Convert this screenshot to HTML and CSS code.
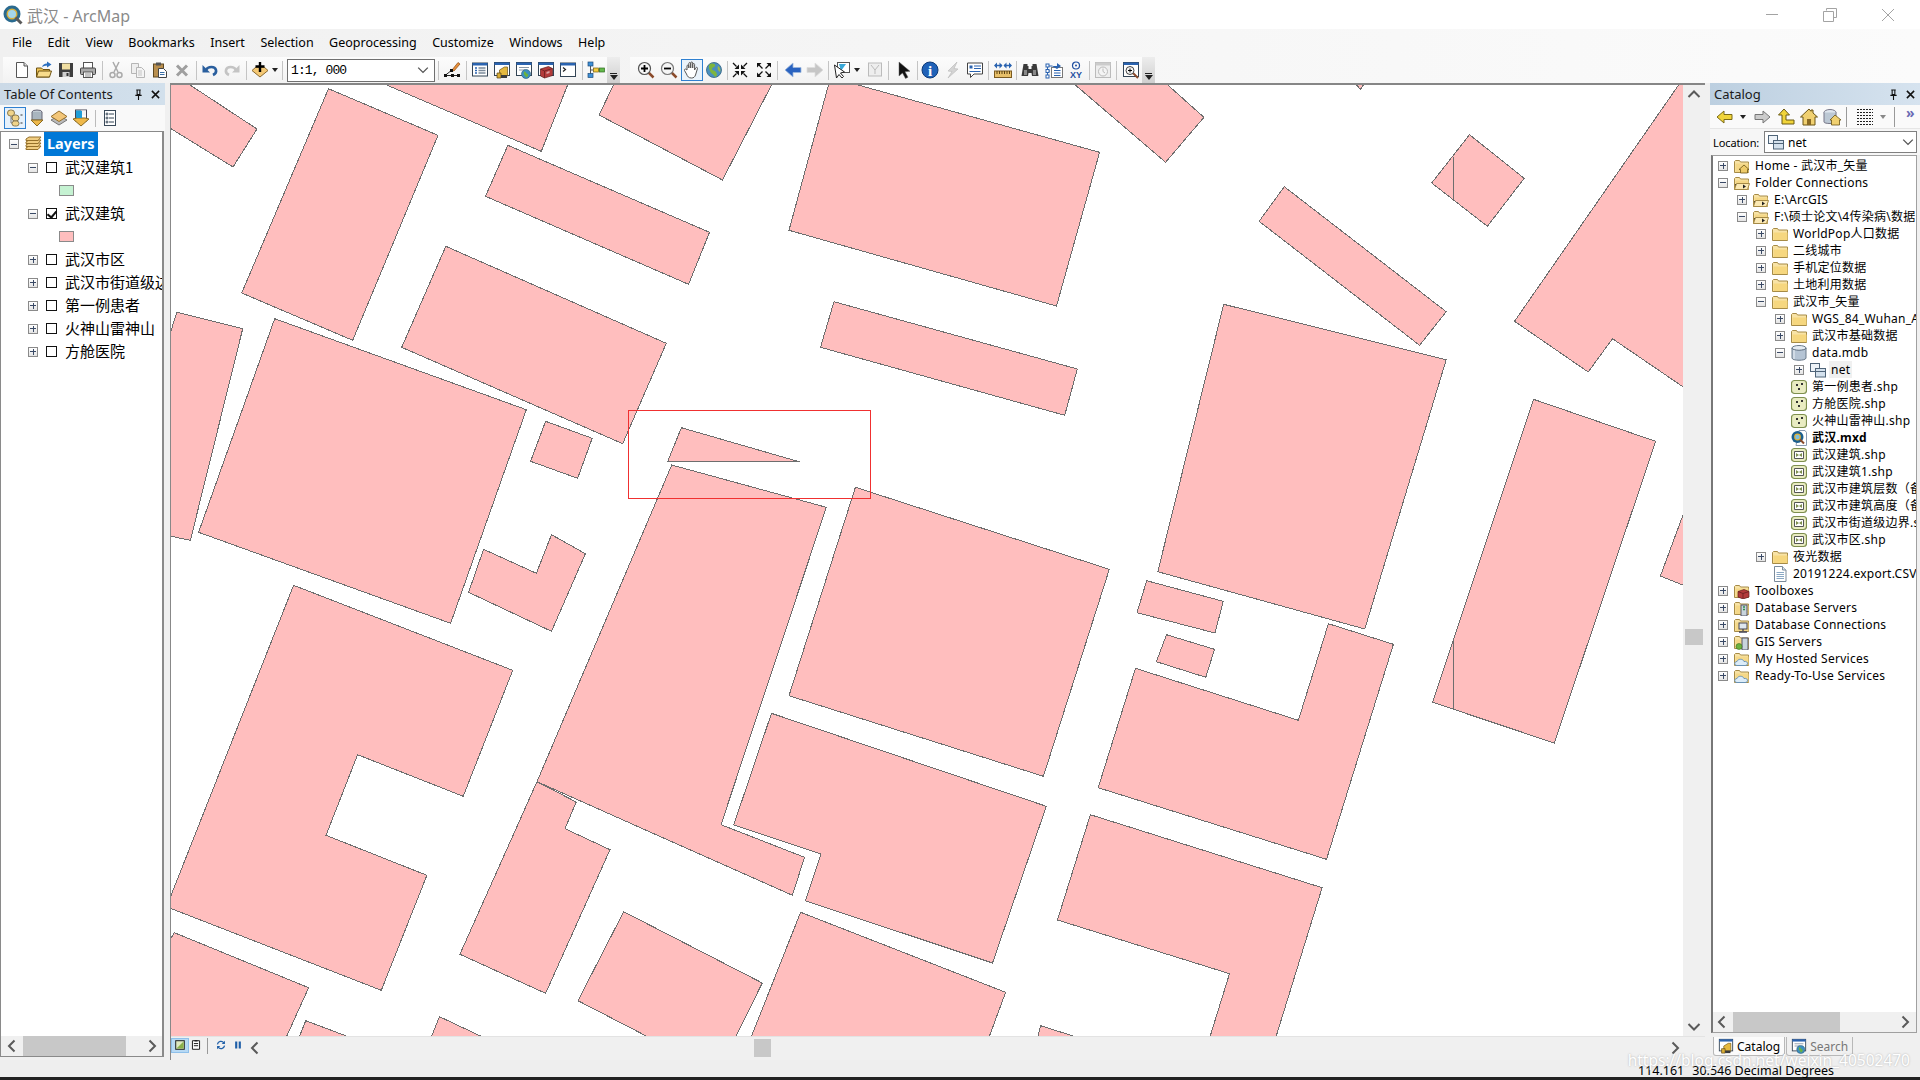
FILE: index.html
```html
<!DOCTYPE html>
<html lang="zh-CN">
<head>
<meta charset="utf-8">
<title>武汉 - ArcMap</title>
<link rel="stylesheet" href="styles.css">
</head>
<body>
<svg class="defs" xmlns="http://www.w3.org/2000/svg">
<symbol id="i-new" viewBox="0 0 18 18"><path d="M3.500 1.500h7.500l3.500 3.500v11.500h-11z" fill="#fff" stroke="#555"/><path d="M11 1.500V5h3.500" fill="#ddd" stroke="#555"/></symbol>
<symbol id="i-open" viewBox="0 0 18 18"><path d="M1.500 7h5l1.500 1.500h6.500v7.500H1.500z" fill="#f0c557" stroke="#6e5312"/><path d="M1.500 16l2-6h13l-2 6z" fill="#f8dc8c" stroke="#6e5312"/><path d="M7 6q1-3.500 5-3.500V.5l4.500 3-4.500 3v-2q-3 0-5 1.500z" fill="#2a6fc0"/></symbol>
<symbol id="i-save" viewBox="0 0 18 18"><path d="M2 2h14v14H2z" fill="#3f3f3f"/><rect x="5" y="2.500" width="8" height="6" fill="#f1dfa2"/><rect x="5.500" y="11" width="7" height="5" fill="#cfcfcf"/><rect x="9.500" y="12" width="2" height="3" fill="#333"/></symbol>
<symbol id="i-print" viewBox="0 0 18 18"><rect x="4.500" y="1.500" width="9" height="6" fill="#fff" stroke="#555"/><rect x="1.500" y="7" width="15" height="6.500" rx="1" fill="#a9a9a9" stroke="#444"/><rect x="4.500" y="11" width="9" height="5.500" fill="#fff" stroke="#555"/><path d="M6 13h6M6 15h6" stroke="#888"/></symbol>
<symbol id="i-cut" viewBox="0 0 18 18"><path d="M6 1l5 10M12 1L7 11" stroke="#aaa" stroke-width="1.500" fill="none"/><circle cx="5.500" cy="14" r="2.500" fill="none" stroke="#aaa" stroke-width="1.500"/><circle cx="12.500" cy="14" r="2.500" fill="none" stroke="#aaa" stroke-width="1.500"/></symbol>
<symbol id="i-copy" viewBox="0 0 18 18"><path d="M2.500 2.500h7v10h-7z" fill="#eee" stroke="#b5b5b5"/><path d="M7.500 6.500h5l3 3v7h-8z" fill="#f4f4f4" stroke="#b5b5b5"/><path d="M9 10h4M9 12h4M9 14h4" stroke="#c4c4c4"/></symbol>
<symbol id="i-paste" viewBox="0 0 18 18"><rect x="2.500" y="3" width="10" height="13" fill="#b98f4e" stroke="#5e4820"/><rect x="5" y="1.500" width="5" height="3" fill="#555"/><path d="M7.500 7.500h5l3 3v6h-8z" fill="#fff" stroke="#444"/><path d="M9 11.500h4.500M9 13.500h4.500" stroke="#3a6ea5"/></symbol>
<symbol id="i-del" viewBox="0 0 18 18"><path d="M4 4.500l10 10M14 4.500l-10 10" stroke="#9f9f9f" stroke-width="3"/></symbol>
<symbol id="i-undo" viewBox="0 0 18 18"><path d="M5 9c2-4 9-4 10 0 .5 2-1 4-3 5" fill="none" stroke="#2a5f9e" stroke-width="2.600"/><path d="M1.500 4v7.500H9z" fill="#2a5f9e"/></symbol>
<symbol id="i-redo" viewBox="0 0 18 18"><path d="M13 9C11 5 4 5 3 9c-.5 2 1 4 3 5" fill="none" stroke="#c4c4c4" stroke-width="2.600"/><path d="M16.500 4v7.500H9z" fill="#c4c4c4"/></symbol>
<symbol id="i-add" viewBox="0 0 18 18"><path d="M1 9.500L9 16l8-6.500L13 6H5z" fill="#f4c874" stroke="#8a6a30"/><path d="M9 1v10M4.500 5.500h9" stroke="#000" stroke-width="2.400"/></symbol>
<symbol id="i-edit" viewBox="0 0 18 18"><path d="M9 9L15 1.500l2 1.500-6 7z" fill="#e88f3a" stroke="#8a4a12" stroke-width=".7"/><path d="M2 14.500L9 9M2 14.500h14" stroke="#222"/><rect x="1" y="13" width="3" height="3" fill="#111"/><rect x="8" y="13" width="3" height="3" fill="#111"/><rect x="14" y="13" width="3" height="3" fill="#111"/><rect x="7" y="8" width="3" height="3" fill="#111"/></symbol>
<symbol id="i-toc" viewBox="0 0 18 18"><rect x="1.500" y="2" width="15" height="13" fill="#fff" stroke="#345"/><rect x="1.500" y="2" width="15" height="2.500" fill="#2a63b0"/><path d="M4 7h2M4 9.500h2M4 12h2" stroke="#2a63b0" stroke-width="1.400"/><path d="M7.500 7h7M7.500 9.500h7M7.500 12h7" stroke="#7b8a9a" stroke-width="1.400"/></symbol>
<symbol id="i-cat" viewBox="0 0 18 18"><rect x="1.500" y="1.500" width="15" height="13" fill="#fff" stroke="#345"/><rect x="1.500" y="1.500" width="15" height="2.500" fill="#2a63b0"/><path d="M6.500 9l5-3h3v9h-8z" fill="#e5b93f" stroke="#6e5312" stroke-width=".7"/><path d="M4 12h4v5H4z" fill="#d9ae36" stroke="#574010" stroke-width=".7"/><rect x="8" y="14" width="6" height="3" fill="#3b3b3b"/></symbol>
<symbol id="i-search" viewBox="0 0 18 18"><rect x="1.500" y="1.500" width="15" height="13" fill="#fff" stroke="#345"/><rect x="1.500" y="1.500" width="15" height="2.500" fill="#2a63b0"/><path d="M4 6.500h10M4 9h6" stroke="#8a97a5"/><circle cx="11" cy="13" r="4.500" fill="#3c8fbf" stroke="#2a5a7a" stroke-width=".6"/><path d="M9 10.500c2 0 2 2 3.500 2.500s.5 3-1.500 3.500c0-2-3-2-2-6z" fill="#6cb23e"/></symbol>
<symbol id="i-box" viewBox="0 0 18 18"><rect x="1.500" y="1.500" width="15" height="13" fill="#fff" stroke="#345"/><rect x="1.500" y="1.500" width="15" height="2.500" fill="#2a63b0"/><path d="M3.500 8l8-2.500 4 2v7l-8 2.500-4-2z" fill="#b33a3a" stroke="#5e1c1c" stroke-width=".7"/><path d="M3.500 8l4 2v7M7.500 10l8-2.500" stroke="#5e1c1c" stroke-width=".7" fill="none"/><path d="M9.500 11l3-1v2l-3 1z" fill="#d9a3a3"/></symbol>
<symbol id="i-py" viewBox="0 0 18 18"><rect x="1.500" y="2" width="15" height="13.500" fill="#fff" stroke="#345"/><rect x="1.500" y="2" width="15" height="2.500" fill="#2a63b0"/><path d="M4 6.500l2.500 2L4 10.500" fill="none" stroke="#222" stroke-width="1.200"/></symbol>
<symbol id="i-model" viewBox="0 0 18 18"><path d="M3.500 5v8M3.500 9H7M11 9h3" stroke="#555"/><rect x="1" y="1" width="5" height="4" fill="#3d8fd6" stroke="#1f4a78" stroke-width=".7"/><rect x="1" y="12.500" width="5" height="4" fill="#3d8fd6" stroke="#1f4a78" stroke-width=".7"/><rect x="6.500" y="7" width="5" height="4" fill="#f3cb3c" stroke="#7a6010" stroke-width=".7"/><rect x="12.500" y="7" width="5" height="4" fill="#63b84a" stroke="#2f6a20" stroke-width=".7"/></symbol>
<symbol id="i-zin" viewBox="0 0 18 18"><path d="M11 11l5.500 5.500" stroke="#8a4a2a" stroke-width="2.500"/><circle cx="7.500" cy="7.500" r="6" fill="#f6f6f6" stroke="#555" stroke-width="1.200"/><path d="M7.500 4v7M4 7.500h7" stroke="#000" stroke-width="1.800"/></symbol>
<symbol id="i-zout" viewBox="0 0 18 18"><path d="M11 11l5.500 5.500" stroke="#8a4a2a" stroke-width="2.500"/><circle cx="7.500" cy="7.500" r="6" fill="#f6f6f6" stroke="#777" stroke-width="1.200"/><path d="M4 7.500h7" stroke="#000" stroke-width="1.800"/></symbol>
<symbol id="i-hand" viewBox="0 0 18 18"><path d="M4 9V5c0-1.300 1.800-1.300 1.800 0v2-4.500c0-1.300 1.900-1.300 1.900 0V7V2c0-1.300 2-1.300 2 0v5-3.500c0-1.300 1.900-1.300 1.900 0V9l1-2c.8-1.300 2.400-.6 1.800.8L12.500 14c-.7 2-2 3-4 3-3 0-4-1.500-5-4L1.500 9.500c-.5-1.300 1-2 1.800-1z" fill="#fff" stroke="#555"/></symbol>
<symbol id="i-globe" viewBox="0 0 18 18"><circle cx="9" cy="9" r="7.500" fill="#4a8fbe" stroke="#2f5f80" stroke-width=".8"/><path d="M5 3c3-1 6 0 5 2s-3 1-3 3 3 1 4 3 2 4-1 5c-1-3-4-3-5-6S3 5 5 3z" fill="#7eb53d"/><path d="M13 5c2 1 3 4 2 6-2-1-3-4-2-6z" fill="#9dbb4a"/></symbol>
<symbol id="i-fin" viewBox="0 0 18 18"><path d="M8 8V3.500L3.500 8zM10 8V3.500L14.500 8zM8 10v4.500L3.500 10zM10 10v4.500l4.500-4.500z" fill="#111"/><path d="M2 2l3.500 3.500M16 2l-3.500 3.500M2 16l3.500-3.500M16 16l-3.500-3.500" stroke="#111" stroke-width="1.300"/></symbol>
<symbol id="i-fout" viewBox="0 0 18 18"><path d="M2 2h4.500L2 6.500zM16 2h-4.500L16 6.500zM2 16h4.500L2 11.500zM16 16h-4.500l4.500-4.500z" fill="#111"/><path d="M4 4l3.500 3.500M14 4l-3.500 3.500M4 14l3.500-3.500M14 14l-3.500-3.500" stroke="#111" stroke-width="1.300"/></symbol>
<symbol id="i-back" viewBox="0 0 18 18"><path d="M1 9l8-7v4.500h8v5H9V16z" fill="#2a63c0" stroke="#9db7dc" stroke-width=".8"/></symbol>
<symbol id="i-fwd" viewBox="0 0 18 18"><path d="M17 9L9 2v4.500H1v5h8V16z" fill="#c6c6c6" stroke="#ddd" stroke-width=".8"/></symbol>
<symbol id="i-sel" viewBox="0 0 18 18"><rect x="4.500" y="1.500" width="12" height="10" fill="#fff" stroke="#555"/><path d="M6 3l7 0-5 7z" fill="#38a8d8"/><path d="M1.500 4l2 13 2.500-3.500 3 3.500 1.500-1.500-3-3.500 4-1z" fill="#fff" stroke="#222" stroke-width="1"/></symbol>
<symbol id="i-sel2" viewBox="0 0 18 18"><rect x="2.500" y="2" width="13" height="13" fill="#eee" stroke="#bbb"/><path d="M5 4l4 5 4-5M9 9v4" fill="none" stroke="#bbb"/></symbol>
<symbol id="i-arrow" viewBox="0 0 18 18"><path d="M4 1l0 14 3.500-3 3 5.500 2.500-1.300-3-5.400 5-.5z" fill="#111" stroke="#666" stroke-width=".5"/></symbol>
<symbol id="i-info" viewBox="0 0 18 18"><circle cx="9" cy="9" r="8" fill="#1f62b8" stroke="#0d3a78"/><text x="9" y="14.500" text-anchor="middle" class="svg-i">i</text></symbol>
<symbol id="i-flash" viewBox="0 0 18 18"><path d="M13 1L4 10l4 .5L4 17l10-9-4-.5z" fill="#d4d4d4" stroke="#bdbdbd" stroke-width=".7"/></symbol>
<symbol id="i-popup" viewBox="0 0 18 18"><path d="M1.500 2h15v11H8l-3.500 3.500V13h-3z" fill="#fff" stroke="#444"/><rect x="3.500" y="4.500" width="3" height="3" fill="#2a63b0"/><path d="M8 5h7M8 7.500h7M3.500 10.500h11" stroke="#2a63b0"/></symbol>
<symbol id="i-measure" viewBox="0 0 18 18"><path d="M1 4.500h7M10 4.500h7" stroke="#2a63b0" stroke-width="1.500"/><path d="M0 4.500l3-3v6zM8.500 4.500l-3-3v6zM9.500 4.500l3-3v6zM18 4.500l-3-3v6z" fill="#2a63b0"/><rect x=".5" y="10" width="17" height="6.500" fill="#e8c06a" stroke="#7a5a20"/><path d="M3 10v3M5.500 10v3M8 10v3M10.500 10v3M13 10v3M15.500 10v3" stroke="#5a4010"/></symbol>
<symbol id="i-binoc" viewBox="0 0 18 18"><path d="M2.500 3h4v2h1v3h3V5h1V3h4l2 12H11l-.5-3h-3L7 15H.5z" fill="#3a3a3a"/><rect x="3" y="9" width="3" height="5" fill="#888"/><rect x="12" y="9" width="3" height="5" fill="#888"/></symbol>
<symbol id="i-route" viewBox="0 0 18 18"><rect x="6.500" y="6.500" width="11" height="10" fill="#fff" stroke="#777"/><path d="M9 9.500h6.500M9 12h6.500M9 14.500h6.500" stroke="#2a63b0"/><path d="M2.500 5v10M2.500 5h5M2.500 10h2.500" stroke="#2a63b0" fill="none"/><rect x="1" y="3" width="3" height="3" fill="#fff" stroke="#2a63b0"/><rect x="1" y="8.500" width="3" height="3" fill="#fff" stroke="#2a63b0"/><rect x="1" y="14" width="3" height="3" fill="#fff" stroke="#2a63b0"/><path d="M7 5h5V2l4 3-4 3z" fill="#2a63b0"/></symbol>
<symbol id="i-xy" viewBox="0 0 18 18"><circle cx="9" cy="4.500" r="3.500" fill="none" stroke="#1f4fa0" stroke-width="1.200"/><circle cx="9" cy="4.500" r="1" fill="#1f4fa0"/><text x="9" y="17" text-anchor="middle" class="svg-xy">XY</text></symbol>
<symbol id="i-time" viewBox="0 0 18 18"><rect x="1.500" y="1.500" width="15" height="15" fill="#eee" stroke="#bbb"/><rect x="1.500" y="1.500" width="15" height="3" fill="#ccc"/><circle cx="9" cy="10.500" r="4.500" fill="#f4f4f4" stroke="#bbb"/><path d="M9 7.500v3l2 1.500" fill="none" stroke="#bbb"/></symbol>
<symbol id="i-zwin" viewBox="0 0 18 18"><rect x="1.500" y="1.500" width="15" height="14" fill="#fff" stroke="#345"/><rect x="1.500" y="1.500" width="15" height="2.500" fill="#2a63b0"/><path d="M11 12l5 5" stroke="#8a4a2a" stroke-width="2"/><circle cx="8" cy="9.500" r="4" fill="#f6f6f6" stroke="#444"/><path d="M8 7.500v4M6 9.500h4" stroke="#000"/></symbol>
<symbol id="i-tree1" viewBox="0 0 18 18"><path d="M5 4v10M5 9h4M5 14h4" stroke="#7a7a7a"/><rect x="1.500" y="1" width="7" height="6" rx="3" fill="#f0d48a" stroke="#8a7a50"/><rect x="6" y="6" width="7" height="6" rx="3" fill="#f0d48a" stroke="#8a7a50"/><rect x="6" y="12" width="7" height="5" rx="2.500" fill="#f0d48a" stroke="#8a7a50"/><path d="M14.500 6h2M14.500 14h2" stroke="#333"/></symbol>
<symbol id="i-tree2" viewBox="0 0 18 18"><ellipse cx="9" cy="3" rx="5" ry="2" fill="#c3ccd4" stroke="#667"/><path d="M4 3v8h10V3" fill="#a9b5bf" stroke="#667"/><path d="M3 11h12l-6 6z" fill="#eeb84a" stroke="#8a6a20"/></symbol>
<symbol id="i-tree3" viewBox="0 0 18 18"><path d="M1 11l8-4.500 8 4.500-8 5z" fill="#bbb" stroke="#777"/><path d="M1 7.500l8-5.500 8 5.500-8 5z" fill="#f3c678" stroke="#96702e"/></symbol>
<symbol id="i-tree4" viewBox="0 0 18 18"><rect x="3.500" y="1" width="11" height="11" fill="#fff" stroke="#445"/><path d="M4 1.500h5v5l-5 5z" fill="#1f9ed8"/><path d="M9.500 1.500h4.500v5h-4.500z" fill="#f4f4f4"/><path d="M1 10l8 7 8-7-4-1H5z" fill="#eeb84a" stroke="#8a6a20"/><rect x="5" y="2" width="5" height="7" fill="#1f9ed8"/></symbol>
<symbol id="i-tree5" viewBox="0 0 18 18"><rect x="3.500" y="1.500" width="11" height="15" fill="#fff" stroke="#3a4a5a"/><circle cx="6" cy="5" r="1" fill="none" stroke="#345"/><circle cx="6" cy="9" r="1" fill="none" stroke="#345"/><circle cx="6" cy="13" r="1" fill="none" stroke="#345"/><path d="M8 5h5M8 9h5M8 13h5" stroke="#345"/></symbol>
<symbol id="i-layers" viewBox="0 0 18 18"><path d="M1 13l3-2h12l-3 3.500H1z" fill="#f0cd82" stroke="#95702a"/><path d="M1 10l3-2h12l-3 3.500H1z" fill="#f0cd82" stroke="#95702a"/><path d="M1 7l3-2h12l-3 3.500H1z" fill="#f0cd82" stroke="#95702a"/><path d="M1 4l3-2h12l-3 3.500H1z" fill="#f0cd82" stroke="#95702a"/></symbol>
<symbol id="i-table" viewBox="0 0 18 18"><path class="crisp" d="M1 1.500h16M1 4.500h16M1 7.500h16M1 10.500h16M1 13.500h16M1 16.500h16" stroke="#222" stroke-dasharray="2 1"/></symbol>
<symbol id="c-back" viewBox="0 0 18 18"><path d="M1 9l7-6v3.500h8v5H8V15z" fill="#f0d43a" stroke="#7a6a18"/></symbol>
<symbol id="c-fwd" viewBox="0 0 18 18"><path d="M17 9l-7-6v3.500H2v5h8V15z" fill="#ccc" stroke="#777"/></symbol>
<symbol id="c-up" viewBox="0 0 18 18"><path d="M7 1L1.500 7H5v9h12v-4H9V7h3.500z" fill="#f0d43a" stroke="#6a5a14"/></symbol>
<symbol id="c-home" viewBox="0 0 18 18"><path d="M9 1L.5 9H3v8h12V9h2.500L13 5V2h-2v1.300z" fill="#f0d070" stroke="#6a5414"/><rect x="7" y="11" width="4" height="6" fill="#8a6a24"/></symbol>
<symbol id="c-conn" viewBox="0 0 18 18"><ellipse cx="7" cy="4.500" rx="6" ry="3" fill="#dfe6ee" stroke="#778"/><path d="M1 4.500V14c0 2 12 2 12 0V4.500" fill="#bcc8d4" stroke="#778"/><path d="M12 7l-5 5h1.500v5h8v-5H18z" fill="#f0d070" stroke="#6a5414" stroke-width=".8"/></symbol>
<symbol id="f-base" viewBox="0 0 16 16"><path d="M.5 14.500v-11l1-1h4l1 1.500h8v10.500z" fill="#f8e3a6" stroke="#a68b46"/><path d="M1.500 5.500h13V14h-13z" fill="#f5d888"/></symbol>
<symbol id="f-conn" viewBox="0 0 16 16"><use href="#f-base"/><path d="M4 12l2-2-2-2v1H1V11h3z" fill="#333"/><path d="M.5 14.500l2-6h13l-2 6z" fill="#fbe9b4" stroke="#a68b46"/><path d="M9 9.500l3 2-3 2z" fill="#222"/></symbol>
<symbol id="f-home" viewBox="0 0 16 16"><use href="#f-base"/><path d="M10 7l-5 4.500h1.500V15h7v-3.500H15z" fill="#eecb6a" stroke="#6a5414" stroke-width=".8"/></symbol>
<symbol id="f-tbx" viewBox="0 0 16 16"><use href="#f-base"/><path d="M4 8.500l6-2 5 2V14l-6 2-5-2z" fill="#b33a3a" stroke="#5e1c1c" stroke-width=".7"/><path d="M4 8.500l5 2V16M9 10.500l6-2" stroke="#5e1c1c" stroke-width=".7" fill="none"/></symbol>
<symbol id="f-srv" viewBox="0 0 16 16"><use href="#f-base"/><rect x="7" y="5" width="6" height="11" fill="#c9d4dc" stroke="#556"/><path d="M9 7h2M9 9.500h2" stroke="#2f8f4f" stroke-width="1.400"/></symbol>
<symbol id="f-dbc" viewBox="0 0 16 16"><use href="#f-base"/><rect x="5" y="6" width="8" height="6" fill="#dfe7ee" stroke="#445"/><path d="M9 12v2M5 15h8" stroke="#445" stroke-width="1.300"/></symbol>
<symbol id="f-gis" viewBox="0 0 16 16"><use href="#f-base"/><rect x="8" y="4" width="6" height="12" fill="#c9d4dc" stroke="#556"/><circle cx="5" cy="12.500" r="3" fill="#6cb23e" stroke="#3a6a20" stroke-width=".6"/></symbol>
<symbol id="f-host" viewBox="0 0 16 16"><use href="#f-base"/><path d="M3 14.500c-3 0-3-4 0-4 1-3 6-3 7 0 4-1 5 4 1 4z" fill="#dcecf8" stroke="#6a93b5"/></symbol>
<symbol id="f-folder" viewBox="0 0 16 16"><path d="M.5 14.500v-11l1-1h4l1 1.500h9v10.500z" fill="#f8e3a6" stroke="#a68b46"/><path d="M1.500 6.500h14V14h-14z" fill="#f6d77f"/></symbol>
<symbol id="s-pt" viewBox="0 0 16 16"><rect x=".5" y="1.500" width="15" height="13" rx="3" fill="#e9ecc2" stroke="#7e8f4e" stroke-width="1.200"/><rect x="5" y="5" width="2" height="2" fill="#333"/><rect x="10" y="4" width="2" height="2" fill="#333"/><rect x="7" y="9" width="2" height="2" fill="#333"/></symbol>
<symbol id="s-pg" viewBox="0 0 16 16"><rect x=".5" y="1.500" width="15" height="13" rx="3" fill="#e9ecc2" stroke="#7e8f4e" stroke-width="1.200"/><path d="M3.500 4.500h9v7h-9z" fill="#fff" stroke="#555"/><path d="M5 6l3 2-3 2zM11 6l-3 2 3 2z" fill="#7e8f4e"/></symbol>
<symbol id="s-mxd" viewBox="0 0 16 16"><path d="M8 .5h6l1.500 2V15.500H5z" fill="#fff" stroke="#8a9ab0"/><circle cx="6.500" cy="7" r="6" fill="#1c5f8e"/><circle cx="6.500" cy="7" r="3.400" fill="#e0b23a"/><circle cx="6.500" cy="7" r="2.200" fill="#7cc0e0"/><path d="M9 9.500l4 4" stroke="#8a4a2a" stroke-width="2"/></symbol>
<symbol id="s-csv" viewBox="0 0 16 16"><path d="M2.500 .5h8l3.500 3.500v11.500H2.500z" fill="#fff" stroke="#7a8a9a"/><path d="M10.500.5V4H14" fill="#dbe5ee" stroke="#7a8a9a"/><path d="M4.500 6.500h7.500M4.500 8.500h7.500M4.500 10.500h7.500M4.500 12.500h7.500" stroke="#8aa8c4"/></symbol>
<symbol id="s-mdb" viewBox="0 0 16 16"><ellipse cx="8" cy="3" rx="7" ry="2.500" fill="#e4ebf2" stroke="#6a7a8a"/><path d="M1 3v10c0 3 14 3 14 0V3c0 3-14 3-14 0z" fill="#b5c4d4" stroke="#6a7a8a"/><path d="M3 5v9" stroke="#eef3f8"/></symbol>
<symbol id="s-net" viewBox="0 0 16 16"><rect x=".5" y="1.500" width="9" height="8" fill="#eef3f8" stroke="#4f6478"/><rect x="5.500" y="6.500" width="10" height="8.500" fill="#d4e1ed" stroke="#4f6478"/><path d="M5.500 9.500h10" stroke="#4f6478"/></symbol>
<symbol id="ch-d" viewBox="0 0 10 10"><path d="M1 3l4 4 4-4" fill="none" stroke="#555" stroke-width="1.100"/></symbol>
<symbol id="ch-l" viewBox="0 0 10 14"><path d="M7.500 1.500L2 7l5.500 5.500" fill="none" stroke="#5a5a5a" stroke-width="2"/></symbol>
<symbol id="ch-r" viewBox="0 0 10 14"><path d="M2.500 1.500L8 7l-5.500 5.500" fill="none" stroke="#5a5a5a" stroke-width="2"/></symbol>
<symbol id="ch-u" viewBox="0 0 14 10"><path d="M1.500 8L7 2.500 12.500 8" fill="none" stroke="#5a5a5a" stroke-width="2"/></symbol>
<symbol id="ch-dn" viewBox="0 0 14 10"><path d="M1.500 2L7 7.500 12.500 2" fill="none" stroke="#5a5a5a" stroke-width="2"/></symbol>
<symbol id="v-data" viewBox="0 0 14 14"><rect x="1" y="1" width="12" height="12" fill="#dfe8c0" stroke="#222" stroke-width="1.400"/><path d="M2 12L12 2v10z" fill="#8ab04a"/></symbol>
<symbol id="v-page" viewBox="0 0 14 14"><path d="M2 1h10v12H2z" fill="#fff" stroke="#222" stroke-width="1.400"/><path d="M4 5h6M4 8h6" stroke="#222" stroke-width="1.400"/><rect x="5" y="0" width="4" height="2" fill="#222"/></symbol>
<symbol id="v-ref" viewBox="0 0 14 14"><path d="M2 6a5 5 0 0 1 9-2M12 8a5 5 0 0 1-9 2" fill="none" stroke="#1f5fa8" stroke-width="1.800"/><path d="M12.500 1v4.500H8zM1.500 13V8.500H6z" fill="#1f5fa8"/></symbol>
<symbol id="v-pause" viewBox="0 0 14 14"><path d="M3 2h3v10H3zM8 2h3v10H8z" fill="#1f5fa8"/></symbol>
<symbol id="globe-logo" viewBox="0 0 20 20"><circle cx="9" cy="9" r="8.500" fill="#2a6a8f"/><circle cx="9" cy="9" r="5.500" fill="#d9b03c"/><circle cx="9" cy="9" r="4" fill="#a4d6ec"/><path d="M12.500 12.500l6 6" stroke="#5a5a5a" stroke-width="3"/></symbol>
</svg>

<div class="app">
  <header class="titlebar">
    <svg class="logo"><use href="#globe-logo"/></svg>
    <span class="title">武汉 - ArcMap</span>
    <div class="winctl">
      <svg class="wc" viewBox="0 0 14 14"><path d="M1 6.500h12" stroke="#a3a3a3" fill="none"/></svg>
      <svg class="wc" viewBox="0 0 14 14"><path d="M3.500 2.500v-2h10v9h-2.500M.5 3.500h10v10H.5z" stroke="#a3a3a3" fill="none"/></svg>
      <svg class="wc" viewBox="0 0 14 14"><path d="M1 1l12 12M13 1L1 13" stroke="#a3a3a3" fill="none"/></svg>
    </div>
  </header>

  <nav class="menubar">
    <span>File</span><span>Edit</span><span>View</span><span>Bookmarks</span><span>Insert</span><span>Selection</span><span>Geoprocessing</span><span>Customize</span><span>Windows</span><span>Help</span>
  </nav>

  <div class="toolrow">
    <div class="toolbar tb1">
      <i class="grip"></i>
      <b class="b"><svg class="ic"><use href="#i-new"/></svg></b>
      <b class="b"><svg class="ic"><use href="#i-open"/></svg></b>
      <b class="b"><svg class="ic"><use href="#i-save"/></svg></b>
      <b class="b"><svg class="ic"><use href="#i-print"/></svg></b>
      <i class="sep"></i>
      <b class="b"><svg class="ic"><use href="#i-cut"/></svg></b>
      <b class="b"><svg class="ic"><use href="#i-copy"/></svg></b>
      <b class="b"><svg class="ic"><use href="#i-paste"/></svg></b>
      <b class="b"><svg class="ic"><use href="#i-del"/></svg></b>
      <i class="sep"></i>
      <b class="b"><svg class="ic"><use href="#i-undo"/></svg></b>
      <b class="b"><svg class="ic"><use href="#i-redo"/></svg></b>
      <i class="sep"></i>
      <b class="b"><svg class="ic"><use href="#i-add"/></svg></b>
      <i class="caret"></i>
      <i class="sep"></i>
      <div class="scale"><span>1:1, 000</span><svg class="combo-ch"><use href="#ch-d"/></svg></div>
      <i class="sep"></i>
      <b class="b"><svg class="ic"><use href="#i-edit"/></svg></b>
      <i class="sep"></i>
      <b class="b"><svg class="ic"><use href="#i-toc"/></svg></b>
      <b class="b"><svg class="ic"><use href="#i-cat"/></svg></b>
      <b class="b"><svg class="ic"><use href="#i-search"/></svg></b>
      <b class="b"><svg class="ic"><use href="#i-box"/></svg></b>
      <b class="b"><svg class="ic"><use href="#i-py"/></svg></b>
      <i class="sep"></i>
      <b class="b"><svg class="ic"><use href="#i-model"/></svg></b>
      <i class="over"></i>
    </div>
    <div class="toolbar tb2">
      <i class="grip"></i>
      <b class="b"><svg class="ic"><use href="#i-zin"/></svg></b>
      <b class="b m1"><svg class="ic"><use href="#i-zout"/></svg></b>
      <b class="b m1 on"><svg class="ic"><use href="#i-hand"/></svg></b>
      <b class="b"><svg class="ic"><use href="#i-globe"/></svg></b>
      <i class="sep s4"></i>
      <b class="b"><svg class="ic"><use href="#i-fin"/></svg></b>
      <b class="b m2"><svg class="ic"><use href="#i-fout"/></svg></b>
      <i class="sep s5"></i>
      <b class="b m2"><svg class="ic"><use href="#i-back"/></svg></b>
      <b class="b"><svg class="ic"><use href="#i-fwd"/></svg></b>
      <i class="sep s4"></i>
      <b class="b m1"><svg class="ic"><use href="#i-sel"/></svg></b>
      <i class="caret"></i>
      <b class="b m3"><svg class="ic"><use href="#i-sel2"/></svg></b>
      <i class="sep s5"></i>
      <b class="b m2"><svg class="ic"><use href="#i-arrow"/></svg></b>
      <i class="sep s4"></i>
      <b class="b"><svg class="ic"><use href="#i-info"/></svg></b>
      <b class="b m1"><svg class="ic"><use href="#i-flash"/></svg></b>
      <b class="b"><svg class="ic"><use href="#i-popup"/></svg></b>
      <i class="sep s5"></i>
      <b class="b m1"><svg class="ic"><use href="#i-measure"/></svg></b>
      <i class="sep s4"></i>
      <b class="b m1"><svg class="ic"><use href="#i-binoc"/></svg></b>
      <b class="b m2"><svg class="ic"><use href="#i-route"/></svg></b>
      <b class="b"><svg class="ic"><use href="#i-xy"/></svg></b>
      <i class="sep s4"></i>
      <b class="b m1"><svg class="ic"><use href="#i-time"/></svg></b>
      <i class="sep s5"></i>
      <b class="b m1"><svg class="ic"><use href="#i-zwin"/></svg></b>
      <i class="over"></i>
    </div>
  </div>

  <main class="main">
    <aside class="toc">
      <div class="panehead"><span>Table Of Contents</span><span class="pinx"><svg class="pin" viewBox="0 0 10 12"><path d="M2.500 1h5M3.500 1v5h3V1M1.500 7h7M5 7v5" stroke="#111" stroke-width="1.200" fill="none"/></svg><svg class="xx" viewBox="0 0 10 10"><path d="M1 1l8 8M9 1l-8 8" stroke="#111" stroke-width="1.700"/></svg></span></div>
      <div class="toc-tools">
        <b class="tt on"><svg class="ic"><use href="#i-tree1"/></svg></b>
        <b class="tt"><svg class="ic"><use href="#i-tree2"/></svg></b>
        <b class="tt"><svg class="ic"><use href="#i-tree3"/></svg></b>
        <b class="tt"><svg class="ic"><use href="#i-tree4"/></svg></b>
        <i class="tsep"></i>
        <b class="tt"><svg class="ic"><use href="#i-tree5"/></svg></b>
      </div>
      <div class="toc-box">
        <div class="toc-tree">
          <div class="tr tr-root"><i class="exp"></i><svg class="ic lay"><use href="#i-layers"/></svg><span class="root-label">Layers</span></div>
          <div class="tr"><i class="exp"></i><i class="chk"></i><span>武汉建筑1</span></div>
          <div class="tr patchrow"><i class="patch green"></i></div>
          <div class="tr"><i class="exp"></i><i class="chk on"></i><span>武汉建筑</span></div>
          <div class="tr patchrow"><i class="patch red"></i></div>
          <div class="tr"><i class="exp plus"></i><i class="chk"></i><span>武汉市区</span></div>
          <div class="tr"><i class="exp plus"></i><i class="chk"></i><span>武汉市街道级边界</span></div>
          <div class="tr"><i class="exp plus"></i><i class="chk"></i><span>第一例患者</span></div>
          <div class="tr"><i class="exp plus"></i><i class="chk"></i><span>火神山雷神山</span></div>
          <div class="tr"><i class="exp plus"></i><i class="chk"></i><span>方舱医院</span></div>
        </div>
        <div class="hscroll toc-scroll"><svg class="chh"><use href="#ch-l"/></svg><i class="thumb"></i><svg class="chh"><use href="#ch-r"/></svg></div>
      </div>
    </aside>

    <section class="mapcol">
      <div class="maprow">
        <svg class="map" viewBox="171 85 1512 951" xmlns="http://www.w3.org/2000/svg">
          <g class="polys">
            <polygon points="187,83 257,129 233,167 165,125 165,83"/>
            <polygon points="328.500,88.700 438,135.300 352.700,340.300 241.700,293"/>
            <polygon points="382,83 568.400,83 541.300,151.300"/>
            <polygon points="614.500,83 772.500,83 722.500,180 599,115"/>
            <polygon points="829,83 858,85 1099.600,152.300 1056.500,306 789,230.300"/>
            <polygon points="507.800,145.300 709.500,232.300 688.600,284.300 485.500,196.300"/>
            <polygon points="445.800,246.300 666.300,343.300 622.700,443.700 401.700,347.300"/>
            <polygon points="176.800,312.300 242.700,328.700 190.400,540.300 165,535 165,350"/>
            <polygon points="274.700,318.700 526.300,409.700 450.600,623.300 198.600,532.300"/>
            <polygon points="545.600,421.300 592.200,438.300 577.600,478.300 530.600,461.300"/>
            <polygon points="483.600,549.300 536.400,573.300 551.500,534.700 585.400,553.700 551.500,631.300 468.600,592.300"/>
            <polygon points="681.400,427.700 800,462 667.800,461.300"/>
            <polygon points="671.700,465 826.300,507.300 721,824.700 804.500,857.300 792.400,895.300 537,781.700"/>
            <polygon points="537,781.700 576.200,802 565,828.700 610,849.700 545.600,993.300 459.900,954.300"/>
            <polygon points="855.400,487.300 1109.300,569.300 1043.400,776.300 789,695.700"/>
            <polygon points="771.500,713.300 1046.300,806.300 992.500,963 805.400,900.700 821,854 733.700,825"/>
            <polygon points="293.600,585.300 512.700,670.300 463.200,796.300 357.600,754.700 326,835.300 426.900,875.300 381.300,990.300 167,907 167,905.600"/>
            <polygon points="174.400,932.700 308.600,987.700 285,1040 165,1040 165,948"/>
            <polygon points="305.700,1020.700 357,1040 298,1040"/>
            <polygon points="439.500,1016.700 489,1040 430,1040"/>
            <polygon points="623.700,911.700 762.300,983 734,1040 654,1040 578,1000.700"/>
            <polygon points="800.600,912.300 1005.600,992.300 988,1040 750,1040"/>
            <polygon points="1040.500,1025.700 1086,1040 1037,1040"/>
            <polygon points="1073,83 1165.600,83 1203.900,117.300 1165.600,162.300"/>
            <polygon points="1355,83 1364.800,83 1360.400,89.300"/>
            <polygon points="1284.300,186.700 1446.200,311.700 1419.600,345.300 1259.100,221.300"/>
            <polygon points="1469.500,134.700 1524.200,178.300 1487.400,226.300 1431.700,183"/>
            <polygon points="1680,83 1690,83 1690,391.600 1612.500,338.700 1588.200,372 1514.500,321.300"/>
            <polygon points="1223.700,304.300 1446.200,359.700 1364.800,629 1157.800,571.700"/>
            <polygon points="1146.700,580.700 1223.200,601.300 1215,633 1137,612.700"/>
            <polygon points="1166.500,634.700 1214.500,649.300 1205.800,677.300 1156.400,661.700"/>
            <polygon points="1135.500,668.300 1298.400,720.300 1328.400,623.700 1393.400,644.300 1326.500,859.300 1098.200,787.700"/>
            <polygon points="1090.400,814.700 1322.100,887.700 1275,1040 1209,1040 1229.500,973.700 1057.500,920"/>
            <polygon points="1533.500,399.300 1655.600,441.300 1554.300,743 1432.600,702.300"/>
            <polygon points="1683,515 1660.400,576 1690,588 1690,497"/>
            <polygon points="834,301.700 1077.300,369 1064.700,415.300 820.500,347.300"/>
          </g>
          <path class="inner" d="M1453.500 156.700V199M1453.500 640V709"/>
          <rect class="frame" x="628.500" y="410.500" width="242" height="88"/>
        </svg>
        <div class="vscroll"><svg class="chv"><use href="#ch-u"/></svg><i class="vthumb"></i><svg class="chv"><use href="#ch-dn"/></svg></div>
      </div>
      <div class="mapbar">
        <b class="vb on"><svg class="ic10"><use href="#v-data"/></svg></b>
        <b class="vb vb1"><svg class="ic10"><use href="#v-page"/></svg></b>
        <i class="vsep"></i>
        <b class="vb vb2"><svg class="ic10"><use href="#v-ref"/></svg></b>
        <b class="vb vb3"><svg class="ic10"><use href="#v-pause"/></svg></b>
        <svg class="chh mb-l"><use href="#ch-l"/></svg>
        <i class="mthumb"></i>
        <svg class="chh mb-r"><use href="#ch-r"/></svg>
      </div>
    </section>

    <aside class="catalog">
      <div class="panehead chead"><span>Catalog</span><span class="pinx"><svg class="pin" viewBox="0 0 10 12"><path d="M2.500 1h5M3.500 1v5h3V1M1.500 7h7M5 7v5" stroke="#111" stroke-width="1.200" fill="none"/></svg><svg class="xx" viewBox="0 0 10 10"><path d="M1 1l8 8M9 1l-8 8" stroke="#111" stroke-width="1.700"/></svg></span></div>
      <div class="cat-tools">
        <svg class="ic"><use href="#c-back"/></svg>
        <i class="caret c1"></i>
        <svg class="ic c2"><use href="#c-fwd"/></svg>
        <svg class="ic c2"><use href="#c-up"/></svg>
        <svg class="ic c3"><use href="#c-home"/></svg>
        <svg class="ic c3"><use href="#c-conn"/></svg>
        <i class="csep"></i>
        <svg class="ic c4"><use href="#i-table"/></svg>
        <i class="caret c1 grey"></i>
        <i class="csep c5"></i>
        <span class="more">»</span>
      </div>
      <div class="locrow">
        <span class="loclabel">Location:</span>
        <div class="loc"><svg class="ic16"><use href="#s-net"/></svg><span>net</span><svg class="combo-ch"><use href="#ch-d"/></svg></div>
      </div>
      <div class="cat-box">
        <div class="cat-tree">
          <div class="r l0"><i class="exp plus"></i><svg class="ic16"><use href="#f-home"/></svg><span>Home - 武汉市_矢量</span></div>
          <div class="r l0"><i class="exp"></i><svg class="ic16"><use href="#f-conn"/></svg><span>Folder Connections</span></div>
          <div class="r l1"><i class="exp plus"></i><svg class="ic16"><use href="#f-conn"/></svg><span>E:\ArcGIS</span></div>
          <div class="r l1"><i class="exp"></i><svg class="ic16"><use href="#f-conn"/></svg><span>F:\硕士论文\4传染病\数据</span></div>
          <div class="r l2"><i class="exp plus"></i><svg class="ic16"><use href="#f-folder"/></svg><span>WorldPop人口数据</span></div>
          <div class="r l2"><i class="exp plus"></i><svg class="ic16"><use href="#f-folder"/></svg><span>二线城市</span></div>
          <div class="r l2"><i class="exp plus"></i><svg class="ic16"><use href="#f-folder"/></svg><span>手机定位数据</span></div>
          <div class="r l2"><i class="exp plus"></i><svg class="ic16"><use href="#f-folder"/></svg><span>土地利用数据</span></div>
          <div class="r l2"><i class="exp"></i><svg class="ic16"><use href="#f-folder"/></svg><span>武汉市_矢量</span></div>
          <div class="r l3"><i class="exp plus"></i><svg class="ic16"><use href="#f-folder"/></svg><span>WGS_84_Wuhan_Area</span></div>
          <div class="r l3"><i class="exp plus"></i><svg class="ic16"><use href="#f-folder"/></svg><span>武汉市基础数据</span></div>
          <div class="r l3"><i class="exp"></i><svg class="ic16"><use href="#s-mdb"/></svg><span>data.mdb</span></div>
          <div class="r l4"><i class="exp plus"></i><svg class="ic16"><use href="#s-net"/></svg><span class="picked">net</span></div>
          <div class="r l3"><i class="exp none"></i><svg class="ic16"><use href="#s-pt"/></svg><span>第一例患者.shp</span></div>
          <div class="r l3"><i class="exp none"></i><svg class="ic16"><use href="#s-pt"/></svg><span>方舱医院.shp</span></div>
          <div class="r l3"><i class="exp none"></i><svg class="ic16"><use href="#s-pt"/></svg><span>火神山雷神山.shp</span></div>
          <div class="r l3"><i class="exp none"></i><svg class="ic16"><use href="#s-mxd"/></svg><span class="bold">武汉.mxd</span></div>
          <div class="r l3"><i class="exp none"></i><svg class="ic16"><use href="#s-pg"/></svg><span>武汉建筑.shp</span></div>
          <div class="r l3"><i class="exp none"></i><svg class="ic16"><use href="#s-pg"/></svg><span>武汉建筑1.shp</span></div>
          <div class="r l3"><i class="exp none"></i><svg class="ic16"><use href="#s-pg"/></svg><span>武汉市建筑层数（备份）.shp</span></div>
          <div class="r l3"><i class="exp none"></i><svg class="ic16"><use href="#s-pg"/></svg><span>武汉市建筑高度（备份）.shp</span></div>
          <div class="r l3"><i class="exp none"></i><svg class="ic16"><use href="#s-pg"/></svg><span>武汉市街道级边界.shp</span></div>
          <div class="r l3"><i class="exp none"></i><svg class="ic16"><use href="#s-pg"/></svg><span>武汉市区.shp</span></div>
          <div class="r l2"><i class="exp plus"></i><svg class="ic16"><use href="#f-folder"/></svg><span>夜光数据</span></div>
          <div class="r l2"><i class="exp none"></i><svg class="ic16"><use href="#s-csv"/></svg><span>20191224.export.CSV</span></div>
          <div class="r l0"><i class="exp plus"></i><svg class="ic16"><use href="#f-tbx"/></svg><span>Toolboxes</span></div>
          <div class="r l0"><i class="exp plus"></i><svg class="ic16"><use href="#f-srv"/></svg><span>Database Servers</span></div>
          <div class="r l0"><i class="exp plus"></i><svg class="ic16"><use href="#f-dbc"/></svg><span>Database Connections</span></div>
          <div class="r l0"><i class="exp plus"></i><svg class="ic16"><use href="#f-gis"/></svg><span>GIS Servers</span></div>
          <div class="r l0"><i class="exp plus"></i><svg class="ic16"><use href="#f-host"/></svg><span>My Hosted Services</span></div>
          <div class="r l0"><i class="exp plus"></i><svg class="ic16"><use href="#f-host"/></svg><span>Ready-To-Use Services</span></div>
        </div>
        <div class="hscroll cat-scroll"><svg class="chh"><use href="#ch-l"/></svg><i class="thumb"></i><svg class="chh"><use href="#ch-r"/></svg></div>
      </div>
      <div class="tabs">
        <div class="tab active"><svg class="ic16"><use href="#i-cat"/></svg><span>Catalog</span></div>
        <div class="tab"><svg class="ic16"><use href="#i-search"/></svg><span>Search</span></div>
      </div>
    </aside>
  </main>

  <footer class="status">
    <span class="coord">114.161</span><span class="coord2">30.546 Decimal Degrees</span>
    <span class="watermark">https://blog.csdn.net/weixin_40502470</span>
  </footer>
  <div class="taskedge"></div>
</div>
</body>
</html>
```
FILE: styles.css
```css
* { box-sizing: border-box; }
html, body { margin: 0; padding: 0; }
body {
  width: 1920px; height: 1080px; overflow: hidden; background: #f0f0f0; color: #000;
  font-family: "Noto Sans", "Noto Sans CJK SC", sans-serif; font-size: 12px;
}
b, i { font-weight: normal; font-style: normal; }
.defs { display: none; }
.svg-i { font: bold 15px "Liberation Serif", serif; fill: #fff; }
.svg-xy { font: bold 9px "Liberation Sans", sans-serif; fill: #1f4fa0; }
.crisp { shape-rendering: crispEdges; }

.app { display: flex; flex-direction: column; height: 1080px; }

/* title bar */
.titlebar { height: 29px; background: #fff; display: flex; align-items: center; flex: none; }
.logo { width: 20px; height: 20px; margin-left: 3px; }
.title { margin-left: 4px; font-size: 16px; color: #8a8a8a; }
.winctl { margin-left: auto; display: flex; }
.wc { width: 14px; height: 14px; margin-right: 44px; }
.wc:last-child { margin-right: 25px; }

/* menu */
.menubar {
  height: 28px; flex: none; display: flex; align-items: center; gap: 15.5px; padding: 0 0 0 12px;
  background: linear-gradient(90deg, #f0f0f0, #fbfbfb); font-size: 12.5px;
}
.menubar span { line-height: 28px; }

/* toolbars */
.toolrow {
  height: 26px; flex: none; display: flex; padding-left: 3px; gap: 10px;
  background: linear-gradient(90deg, #f0f0f0, #fbfbfb);
}
.toolbar { display: flex; align-items: center; height: 26px; background: linear-gradient(#fcfcfc, #f2f2f2); }
.tb1 { width: 617px; padding-left: 8px; }
.tb2 { width: 525px; padding-left: 5px; }
.grip { width: 0; }
.b { width: 22px; height: 22px; display: flex; align-items: center; justify-content: center; flex: none; }
.b.on { border: 1px solid #2f80d0; background: #eaf3fb; }
.m1 { margin-left: 1px; }
.m2 { margin-left: 2px; }
.m3 { margin-left: 3px; }
.ic { width: 18px; height: 18px; flex: none; }
.sep { width: 6px; height: 19px; flex: none; background: linear-gradient(#c4c4c4, #c4c4c4) center / 1px 100% no-repeat; }
.s4 { width: 4px; }
.s5 { width: 5px; }
.caret { width: 8px; height: 22px; flex: none; position: relative; }
.caret::after { content: ""; position: absolute; left: 1px; top: 9px; border: 3px solid transparent; border-top: 4px solid #222; border-bottom: 0; }
.over { margin-left: auto; width: 13px; height: 26px; background: linear-gradient(#ededed, #cfcfcf); position: relative; flex: none; }
.over::after { content: ""; position: absolute; left: 3px; bottom: 3px; width: 0; border: 4px solid transparent; border-top: 5px solid #222; border-bottom: 0; }
.over::before { content: ""; position: absolute; left: 3px; bottom: 9px; width: 7px; height: 1px; background: #222; }
.scale {
  width: 148px; height: 23px; margin: 0 0 0 2px; border: 1px solid #707070; background: #fff; flex: none;
  display: flex; align-items: center; justify-content: space-between; padding: 0 5px 0 3px;
  font-family: "Liberation Mono", monospace; font-size: 13px; letter-spacing: -.9px;
}
.combo-ch { width: 12px; height: 12px; flex: none; }

/* panes */
.main { flex: 1; display: flex; min-height: 0; }
.toc { width: 165px; flex: none; display: flex; flex-direction: column; margin-right: 5px; }
.panehead {
  height: 22px; flex: none; display: flex; align-items: center; justify-content: space-between; padding: 0 3px 0 4px;
  background: linear-gradient(90deg, #ccdae7, #d2e0ec); font-size: 13px; color: #1a1a1a;
}
.pinx { display: flex; align-items: center; gap: 8px; }
.pin { width: 9px; height: 11px; }
.xx { width: 9px; height: 9px; margin-right: 2px; }
.toc-tools { height: 26px; flex: none; display: flex; align-items: center; padding-left: 4px; background: #f9f9f9; }
.tt { width: 22px; height: 22px; display: flex; align-items: center; justify-content: center; flex: none; }
.tt.on { border: 1px solid #2f80d0; background: #e6f1fb; }
.tsep { width: 1px; height: 17px; background: #bbb; margin: 0 3px; }
.toc-box {
  flex: 1; margin: 0 1px 3px 0; background: #fff; border: 1px solid #8a8a8a; border-right-width: 2px;
  display: flex; flex-direction: column; min-height: 0;
}
.toc-tree { flex: 1; overflow: hidden; }
.tr { height: 23px; display: flex; align-items: center; padding-left: 27px; font-size: 15px; white-space: nowrap; line-height: 23px; font-family: "Noto Sans CJK SC", "Noto Sans", sans-serif; }
.tr > span { margin-top: -2px; }
.tr-root { height: 24px; padding-left: 8px; }
.tr-root .lay { margin-left: 6px; }
.tr > .root-label { margin: 0 0 0 1px; background: #0078d7; color: #fff; font-weight: 700; padding: 0 3px; height: 24px; line-height: 23px; font-family: "Noto Sans", sans-serif; font-size: 14.5px; }
.chk { width: 11px; height: 11px; border: 1px solid #111; margin-left: 8px; margin-right: 8px; background: #fff; flex: none; position: relative; }
.chk.on::after { content: ""; position: absolute; left: 2px; top: 0; width: 4px; height: 7px; border: solid #111; border-width: 0 2px 2px 0; transform: rotate(40deg); }
.patchrow { padding-left: 58px; }
.patch { width: 15px; height: 11px; border: 1px solid #8a8a8a; }
.patch.green { background: #c5f2d2; }
.patch.red { background: #ffbebe; }

.exp { width: 10px; height: 10px; border: 1px solid #8a8a8a; background: linear-gradient(#fff, #e4e4e4); flex: none; position: relative; display: block; }
.exp::before { content: ""; position: absolute; left: 1px; right: 1px; height: 1px; top: 3.500px; background: #3a4a66; }
.exp.plus::after { content: ""; position: absolute; top: 1px; bottom: 1px; left: 3.500px; width: 1px; background: #3a4a66; }
.exp.none { visibility: hidden; }

.hscroll { display: flex; align-items: center; background: #f0f0f0; flex: none; }
.chh { width: 10px; height: 14px; flex: none; }
.hscroll .chh:last-child { margin-left: auto; }
.toc-scroll { height: 20px; padding: 0 5px 0 6px; }
.toc-scroll .thumb { width: 103px; height: 20px; background: #c8c8c8; margin-left: 6px; }

/* map */
.mapcol { width: 1535px; flex: none; display: flex; flex-direction: column; margin-right: 5px; border-left: 1px solid #888; border-top: 2px solid #868686; }
.maprow { display: flex; height: 951px; flex: none; }
.map { width: 1512px; height: 951px; background: #fff; display: block; flex: none; }
.polys polygon { fill: #ffbebe; stroke: #6e6e6e; stroke-width: 1; shape-rendering: crispEdges; }
.inner { stroke: #6e6e6e; fill: none; shape-rendering: crispEdges; }
.frame { fill: none; stroke: #f03030; stroke-width: 1; shape-rendering: crispEdges; }
.vscroll { width: 22px; display: flex; flex-direction: column; align-items: center; background: #f0f0f0; padding-top: 4px; }
.chv { width: 14px; height: 10px; flex: none; }
.vthumb { width: 18px; height: 16px; background: #c8c8c8; margin-top: 530px; margin-bottom: 377px; flex: none; }
.mapbar { display: flex; align-items: center; height: 22px; flex: none; background: #f0f0f0; border-top: 1px solid #e3e3e3; }
.vb { width: 18px; height: 15px; display: flex; align-items: center; justify-content: center; flex: none; margin-bottom: 5px; }
.vb.on { background: #b7d9f4; border: 1px solid #8fc0ea; }
.ic10 { width: 10px; height: 10px; }
.vb1 { margin-left: -2px; }
.vsep { width: 1px; height: 16px; background: #999; margin: 0 0 4px 2px; flex: none; }
.vb2 { margin-left: 4px; }
.vb3 { margin-left: -1px; }
.mb-l { margin-left: 3px; }
.mthumb { width: 17px; height: 18px; background: #c8c8c8; margin-left: 494px; flex: none; }
.mb-r { margin-left: 899px; }

/* catalog */
.catalog { width: 210px; flex: none; display: flex; flex-direction: column; }
.chead { background: linear-gradient(90deg, #bccfe0, #d6e3ef); padding-left: 4px; }
.cat-tools { height: 24px; flex: none; display: flex; align-items: center; padding-left: 6px; background: #fafafa; border-bottom: 1px solid #e6e6e6; }
.c1 { margin-left: 5px; }
.c2 { margin-left: 6px; }
.c3 { margin-left: 5px; }
.c4 { margin-left: 9px; }
.csep { width: 1px; height: 20px; background: #999; margin-left: 5px; flex: none; }
.c5 { margin-left: 7px; }
.caret.grey::after { border-top-color: #888; }
.more { margin-left: 11px; color: #6a6ab4; font-size: 14px; line-height: 14px; margin-top: -8px; font-weight: 700; }
.locrow { height: 26px; flex: none; display: flex; align-items: center; padding-left: 3px; background: #f6f6f6; }
.loclabel { font-size: 11px; letter-spacing: -.1px; }
.loc {
  margin-left: auto; margin-right: 3px; width: 153px; height: 22px; border: 1px solid #808080; background: #fff;
  display: flex; align-items: center; padding-left: 3px; font-size: 12px; gap: 4px;
}
.loc .combo-ch { margin-left: auto; margin-right: 2px; }
.ic16 { width: 16px; height: 16px; flex: none; }
.cat-box {
  height: 878px; flex: none; margin: 0 3px 0 1px; background: #fff; border: 1px solid #a0a0a0; border-left: 2px solid #777;
  display: flex; flex-direction: column;
}
.cat-tree { flex: 1; overflow: hidden; padding-top: 1px; }
.r { height: 17px; display: flex; align-items: center; white-space: nowrap; font-size: 12px; line-height: 17px; letter-spacing: .25px; }
.r .exp { margin-right: 6px; }
.r .ic16 { margin-right: 5px; }
.l0 { padding-left: 5px; }
.l1 { padding-left: 24px; }
.l2 { padding-left: 43px; }
.l3 { padding-left: 62px; }
.l4 { padding-left: 81px; }
.picked { background: #f0f0f0; padding: 0 2px; margin-left: -2px; }
.bold { font-weight: 700; }
.cat-scroll { height: 20px; padding: 0 6px 0 4px; }
.cat-scroll .thumb { width: 107px; height: 20px; background: #c8c8c8; margin-left: 6px; }
.tabs { display: flex; height: 19px; margin: 4px 0 0 3px; gap: 1px; flex: none; }
.tab { display: flex; align-items: center; gap: 3px; padding: 0 4px; border: 1px solid #b8b8b8; border-top: 0; border-radius: 0 0 3px 3px; font-size: 12px; color: #777; background: #f0f0f0; }
.tab.active { color: #000; background: #fbfbfb; }

/* status */
.status { height: 17px; flex: none; position: relative; background: #eee; padding-left: 1638px; display: flex; align-items: center; font-size: 12.5px; padding-top: 4px; line-height: 10px; }
.coord2 { margin-left: 8px; }
.watermark { position: absolute; right: 10px; top: -5px; font-size: 15.5px; line-height: 11px; color: #fff; text-shadow: 0 0 2px #aaa; white-space: nowrap; }
.taskedge { height: 3px; background: #222; flex: none; }
```
